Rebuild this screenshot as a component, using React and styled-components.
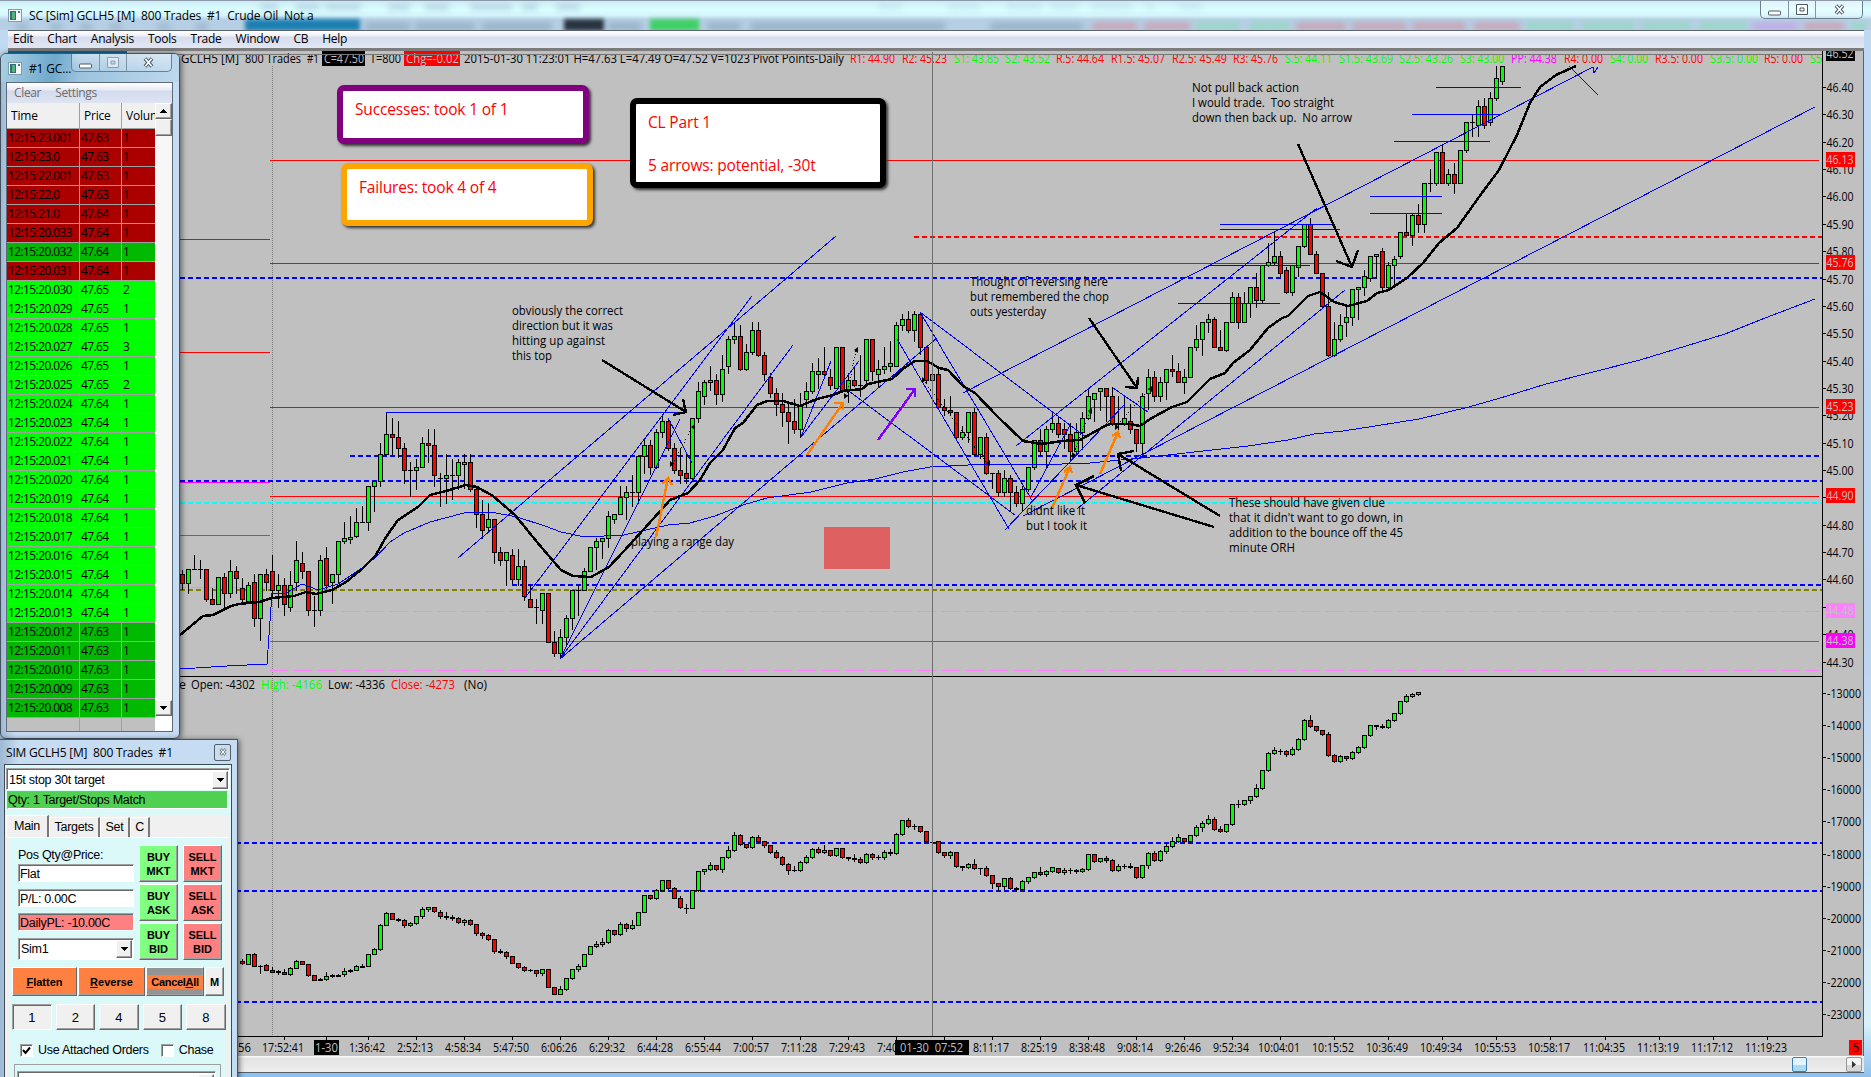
import styled, { createGlobalStyle, css } from "styled-components";

//Data :

const CANDLE_START = 272;
const CANDLE_STEP = 6;

// colour, high, body top, body bottom, low
const priceBars = `
r570,574,583,589 g569,569,583,593 g555,569,569,569 g560,569,569,578 r569,569,599,601
r588,599,604,604 g577,577,604,604 r573,577,593,607 g560,571,593,597 r566,571,578,593
r578,588,599,601 g582,585,601,603 r574,582,618,626 g574,574,618,640 r569,574,582,590
r555,571,590,597 g574,585,590,607 r578,585,604,615 g571,585,607,611 g541,560,582,590
r552,563,571,578 r571,571,610,615 g596,610,610,626 g555,560,610,615 r547,558,585,588
g574,574,582,603 g541,541,574,583 g522,538,541,543 g516,537,539,543 g508,522,536,537
g506,522,522,522 g486,486,522,530 g481,481,486,511 g443,454,481,486 g412,434,454,454
r418,434,437,454 r421,437,448,457 r443,448,470,483 g462,470,470,496 g459,467,470,489
g437,443,467,467 r429,443,445,462 r429,445,475,486 g473,478,478,506 g454,475,478,503
g459,475,475,499 g459,462,475,489 g454,462,464,488 r454,462,489,491 r486,489,514,527
r500,514,530,538 g503,519,527,532 r519,519,552,563 r547,552,560,565 g552,552,560,585
r549,555,579,583 g549,566,579,585 r560,566,596,600 r585,599,607,607 g599,607,607,623
g593,593,610,623 r593,593,642,642 r631,642,653,656 g629,637,653,656 g615,618,637,644
g590,590,618,629 g585,590,590,615 g568,571,590,590 g547,547,571,571 g538,541,547,569
g538,538,541,558 g511,516,538,547 g514,514,519,523 g486,497,514,514 g486,492,497,519
g475,492,492,506 g456,456,492,503 g440,445,456,473 r440,445,467,474 g429,432,467,468
g415,421,432,437 r418,421,448,450 r443,448,470,473 r448,470,475,483 r452,473,478,483
g418,418,478,481 g382,391,418,422 g380,382,396,404 g366,380,382,390 r374,380,394,404
g355,369,394,401 g336,339,366,373 g323,336,339,343 r325,336,369,370 g344,352,369,370
g322,330,352,354 r322,330,355,356 r352,355,374,380 r373,377,393,397 r388,393,404,415
r393,404,412,426 r404,412,421,443 r399,421,429,433 g393,405,429,437 g382,391,399,407
g363,371,391,393 g358,371,374,388 r347,371,374,376 r369,377,385,389 g347,347,388,388
r347,347,390,392 g373,380,390,402 r368,380,385,386 g355,385,385,396 g339,339,380,386
r339,339,371,380 g360,369,374,387 g347,366,369,373 g341,363,366,371 g322,325,366,366
g314,319,325,330 r311,319,330,332 g311,314,330,341 r312,314,347,354 r347,347,380,383
g374,374,380,380 r367,374,407,408 r399,407,410,415 r396,410,412,415 r412,412,437,438
g426,432,437,439 g412,412,432,442 r408,412,454,455 g437,437,454,458 r433,437,473,474
g473,473,473,488 r470,473,492,496 g470,478,492,496 r475,478,492,511 r486,492,503,506
g486,489,503,511 g467,467,489,491 g440,440,467,469 r429,440,451,455 g426,429,451,467
g412,423,429,432 r417,423,434,437 r423,429,434,448 r423,434,451,461 g423,432,451,455
g412,418,432,449 g388,396,418,419 g393,393,399,421 g388,388,391,410 r388,388,396,421
r387,396,423,425 g396,424,424,429 g397,418,423,425 r404,421,429,433 r429,429,443,451
g393,396,443,454 g369,377,393,409 r371,377,396,401 g377,382,396,401 g369,369,382,399
r355,369,371,376 r363,371,382,382 g369,377,382,393 g347,347,377,377 g325,339,347,350
g322,322,339,355 g314,319,322,332 r317,319,347,347 r330,347,350,350 g322,322,350,351
g292,297,322,322 r293,297,322,328 g292,303,322,322 g287,287,303,317 r273,287,300,307
g265,265,300,303 g243,262,265,266 g231,256,262,264 r251,256,273,276 r267,270,292,293
g265,265,292,295 g246,246,267,276 g224,224,246,247 r218,224,254,254 r251,254,273,273
r273,273,306,308 r292,306,355,356 g322,339,355,356 g314,325,339,341 g307,317,322,336
g289,289,317,325 g287,287,289,319 g270,276,287,295 g256,256,278,281 g254,254,256,278
r248,251,287,292 g262,265,287,289 g256,259,265,284 g232,232,256,258 r213,232,235,236
g213,215,235,245 r204,215,224,232 g183,183,224,232 g169,183,183,191 g152,152,183,185
r145,152,183,183 g169,174,183,185 r163,174,183,193 g150,150,183,183 g122,122,150,152
g115,122,122,136 g100,106,125,136 r98,106,125,128 g92,98,122,125 g66,78,98,100
g66,66,81,84`;

const tickBars = `
r959,961,963,964 g954,954,964,964 r953,954,966,966 g965,966,966,973 r964,965,970,970
r967,970,972,972 r970,971,972,974 r969,972,974,974 g967,968,974,975 g960,961,968,968
r961,961,964,964 r964,964,975,976 r975,975,980,980 g978,979,980,980 g972,976,979,980
g974,975,976,977 g974,975,976,976 g968,971,974,976 g969,970,971,972 g965,966,970,970
g964,966,967,967 g954,954,966,966 g948,949,954,954 g924,925,949,950 g912,913,925,925
r913,913,919,919 r918,919,920,921 r919,920,925,927 g922,923,925,926 g916,916,923,924
g907,909,916,918 g907,907,909,911 r907,907,911,912 r910,912,916,918 r912,916,917,919
r915,917,918,920 r917,918,922,923 g919,920,922,925 r919,920,924,925 r924,924,933,935
r932,933,935,938 r934,935,939,940 r939,939,951,953 r949,951,952,953 r951,952,956,958
r956,956,963,963 r963,963,967,968 r966,967,970,971 g969,970,970,971 r970,970,973,976
g969,969,973,975 r969,969,987,987 r987,987,994,994 g986,989,994,994 g978,978,989,990
g969,969,978,979 g964,966,969,971 g954,954,966,966 g946,946,954,954 g941,944,946,947
g938,942,944,946 g929,930,942,943 r930,930,934,935 g922,924,934,935 r923,924,928,931
g920,925,928,929 g912,912,925,925 g895,895,912,912 r895,895,898,899 g889,890,898,899
g880,880,890,890 r880,880,888,889 r887,888,898,898 r896,898,907,908 g904,908,908,913
g890,890,908,908 g871,871,890,891 g869,869,871,874 g862,865,869,870 r865,865,869,870
g857,857,869,872 g846,850,857,858 g832,835,850,851 r834,835,844,845 r844,844,847,848
g836,837,847,848 r835,837,841,842 r841,841,845,847 r845,845,852,853 r850,852,857,858
r856,857,864,865 r863,864,870,874 g866,870,870,871 g861,862,870,871 g855,857,862,863
g848,849,857,858 r847,849,852,853 g845,850,852,853 r850,850,855,856 g848,848,855,856
r848,848,857,858 r857,857,858,860 r854,858,859,861 r857,859,862,863 g853,854,862,863
r853,854,857,859 g855,857,857,859 g850,852,857,859 g849,852,853,855 g833,834,853,854
g820,820,834,835 r818,820,826,827 g824,826,826,829 r826,826,831,832 r831,831,841,842
g841,842,842,844 r841,841,852,853 r852,852,855,857 g851,852,855,858 r852,852,866,867
r866,866,867,870 g863,864,867,868 r859,864,868,869 g868,868,868,874 r866,868,875,876
r875,875,883,888 r883,883,886,890 g878,878,886,889 r877,878,888,889 r887,888,889,891
g880,881,889,890 g877,877,881,883 g872,872,877,878 r867,872,874,875 g870,871,874,876
g867,867,871,872 r868,868,872,873 g868,870,872,874 g868,870,870,873 r869,870,871,873
g868,869,871,872 g854,854,869,870 r854,854,861,862 g858,858,861,862 r856,858,860,862
r859,860,870,871 g864,866,870,871 g864,866,866,868 r863,866,867,868 r867,867,877,878
g865,865,877,878 g852,853,865,868 r851,853,860,861 g850,851,860,861 g843,846,851,853
g837,841,846,847 g834,837,841,842 r838,838,841,842 g835,835,841,842 g825,827,835,836
g821,823,827,831 g815,819,823,824 r817,819,829,830 r826,829,831,832 g824,824,831,832
g804,804,824,825 g800,804,804,807 g800,800,804,805 g796,796,800,803 g784,788,796,797
g770,770,788,789 g752,753,770,771 g747,750,753,754 g749,751,751,754 r750,751,754,756
g747,749,754,755 g738,739,749,750 g719,720,739,740 r715,720,726,727 r726,726,730,731
r730,730,734,735 r732,734,755,756 r754,755,761,762 g755,756,761,762 r756,756,758,760
g751,752,758,759 g746,747,752,753 g735,735,747,748 g725,725,735,736 r725,725,726,729
r724,726,727,728 g719,720,727,728 g713,713,720,721 g701,701,713,714 g694,696,701,702
g693,694,696,697 g692,692,694,695`;

function parseBars(source, firstIndex) {
  return source
    .trim()
    .split(/\s+/)
    .map((item, i) => {
      const [high, top, bottom, low] = item.slice(1).split(",").map(Number);
      return {
        x: CANDLE_START + CANDLE_STEP * (firstIndex + i),
        up: item[0] === "g",
        high,
        top,
        bottom,
        low,
      };
    });
}

const priceCandles = parseBars(priceBars, -15);
const tickCandles = parseBars(tickBars, -5);

const fastAverage =
  "180,635 203,616 213,615 231,606 239,604 259,602 272,598 294,596 306,592 316,594 332,590 346,582 362,569 376,555 386,537 398,520 418,507 430,495 446,491 466,485 477,487 493,496 515,515 537,542 561,570 573,576 591,577 609,567 624,551 653,519 670,500 688,493 700,480 710,463 723,450 735,428 743,423 757,405 767,401 783,401 800,406 817,399 833,395 843,391 862,389 868,384 892,379 903,369 915,361 927,361 939,368 948,370 963,386 975,393 998,417 1023,441 1042,444 1062,441 1080,440 1103,427 1110,424 1130,424 1140,426 1150,419 1172,407 1187,402 1210,379 1225,373 1233,363 1250,350 1268,328 1282,318 1288,316 1308,296 1320,292 1334,302 1348,306 1367,301 1377,293 1389,290 1407,278 1423,263 1439,243 1457,228 1479,197 1499,170 1517,135 1530,103 1540,87 1556,75 1576,66";

const slowAverage =
  "180,669 227,666 267,664 272,593 286,593 302,584 318,590 338,584 362,568 376,557 390,542 404,533 430,522 464,513 491,512 517,517 545,526 561,532 585,537 624,535 668,525 690,523 715,516 743,505 767,498 811,492 847,483 875,479 903,472 930,467 988,464 1034,465 1090,463 1141,458 1248,446 1288,440 1314,434 1343,431 1375,426 1419,419 1469,407 1507,396 1546,384 1640,360 1686,346 1725,334 1765,318 1815,299";

const levels = [
  { x: 270, to: 1819, y: 160, color: "#f00" },
  { x: 270, to: 1819, y: 263, color: "#f00" },
  { x: 270, to: 1819, y: 407, color: "#f00" },
  { x: 270, to: 1819, y: 496, color: "#f00" },
  { x: 180, to: 270, y: 239, color: "#f00" },
  { x: 180, to: 270, y: 352, color: "#f00" },
  { x: 180, to: 270, y: 482, color: "#f0f" },
  { x: 180, to: 270, y: 535, color: "#f0f" },
  { x: 180, to: 270, y: 587, color: "#ff80ff" },
  { x: 270, to: 1819, y: 641, color: "#f0f" },
  { x: 270, to: 1819, y: 611, color: "#ff80ff", dash: "18 6" },
  { x: 270, to: 1819, y: 670, color: "#ff80ff", dash: "18 6" },
  { x: 914, to: 1822, y: 237, color: "#f00", dash: "5 3", width: 2 },
  { x: 180, to: 1822, y: 278, color: "#00f", dash: "5 3", width: 2 },
  { x: 350, to: 1822, y: 456, color: "#00f", dash: "5 3", width: 2 },
  { x: 180, to: 1822, y: 481, color: "#00f", dash: "5 3", width: 2 },
  { x: 180, to: 1822, y: 503, color: "#0ff", dash: "5 3", width: 2 },
  { x: 512, to: 1822, y: 585, color: "#00f", dash: "5 3", width: 2 },
  { x: 180, to: 1822, y: 590, color: "#808000", dash: "5 3", width: 2 },
  { x: 180, to: 1822, y: 843, color: "#00f", dash: "5 3", width: 2 },
  { x: 180, to: 1822, y: 891, color: "#00f", dash: "5 3", width: 2 },
  { x: 180, to: 1822, y: 1002, color: "#00f", dash: "5 3", width: 2 },
];

const swings = [
  [386, 686, 412],
  [1436, 1521, 87],
  [1412, 1502, 114],
  [1394, 1490, 141],
  [1370, 1442, 196],
  [1370, 1442, 213],
  [1220, 1334, 224],
  [1220, 1340, 229],
  [1209, 1310, 265],
  [1178, 1280, 303],
];

const trendLines = [
  "458,558 836,236",
  "525,598 752,296",
  "560,659 680,419",
  "560,659 793,345",
  "560,659 937,338",
  "668,418 692,463",
  "801,437 831,361",
  "801,437 859,361",
  "897,339 1009,529",
  "850,392 1015,515",
  "920,312 1033,502",
  "920,312 1087,438",
  "1005,530 1125,404",
  "1016,446 1317,208",
  "963,393 1593,67 1594,73 1598,67",
  "1569,66 1598,95",
  "1023,516 1815,107",
  "1077,509 1345,290",
  "1113,388 1148,412",
  "1031,497 1070,425",
];

const tradeLines = [
  "673,464 692,427",
  "847,396 856,350",
  "923,380 987,463",
  "1073,455 1090,411",
  "1116,426 1149,389",
];

// shaft start, tip, then both ends of the head
const arrows = [
  { color: "#000", d: "M602,360L686,412M683,399L686,412L673,415" },
  { color: "#000", d: "M1089,318L1137,388M1138,377L1137,388L1125,387" },
  { color: "#000", d: "M1298,144L1352,267M1358,250L1352,267L1336,261" },
  { color: "#000", d: "M1220,516L1118,454M1134,451L1118,454L1121,471" },
  { color: "#000", d: "M1214,527L1076,485M1094,476L1076,485L1085,503" },
  { color: "#ff8000", d: "M656,537L668,478M662,484L668,478L672,485" },
  { color: "#ff8000", d: "M807,455L843,403M834,403L843,403L843,410" },
  { color: "#ff8000", d: "M1052,508L1070,467M1064,472L1070,467L1072,473" },
  { color: "#ff8000", d: "M1100,474L1118,432M1112,436L1118,432L1120,438" },
  { color: "#8000ff", d: "M878,440L915,389M906,389L915,389L915,397" },
];

const notes = [
  [1192, 92, 107, "Not pull back action"],
  [1192, 107, 142, "I would trade.  Too straight"],
  [1192, 122, 160, "down then back up.  No arrow"],
  [970, 286, 138, "Thought of reversing here"],
  [970, 301, 139, "but remembered the chop"],
  [970, 316, 76, "outs yesterday"],
  [512, 315, 111, "obviously the correct"],
  [512, 330, 101, "direction but it was"],
  [512, 345, 93, "hitting up against"],
  [512, 360, 40, "this top"],
  [631, 546, 103, "playing a range day"],
  [1026, 515, 59, "didnt like it"],
  [1026, 530, 61, "but I took it"],
  [1229, 507, 156, "These should have given clue"],
  [1229, 522, 174, "that it didn't want to go down, in"],
  [1229, 537, 174, "addition to the bounce off the 45"],
  [1229, 552, 66, "minute ORH"],
];

const headerItems = [
  [181, 58, "GCLH5 [M]", "#000"],
  [245, 56, "800 Trades", "#000"],
  [307, 12, "#1", "#000"],
  [324, 40, "C=47.50", "#c0c0c0"],
  [370, 31, "T=800", "#000"],
  [406, 53, "Chg=-0.02", "#c0c0c0"],
  [464, 380, "2015-01-30 11:23:01 H=47.63 L=47.49 O=47.52 V=1023 Pivot Points-Daily", "#000"],
  [850, 45, "R1: 44.90", "#f00"],
  [902, 45, "R2: 45.23", "#f00"],
  [954, 45, "S1: 43.85", "#0f0"],
  [1005, 45, "S2: 43.52", "#0f0"],
  [1056, 48, "R.5: 44.64", "#f00"],
  [1111, 54, "R1.5: 45.07", "#f00"],
  [1172, 55, "R2.5: 45.49", "#f00"],
  [1233, 45, "R3: 45.76", "#f00"],
  [1285, 47, "S.5: 44.11", "#0f0"],
  [1339, 54, "S1.5: 43.69", "#0f0"],
  [1399, 54, "S2.5: 43.26", "#0f0"],
  [1460, 44, "S3: 43.00", "#0f0"],
  [1511, 46, "PP: 44.38", "#f0f"],
  [1564, 39, "R4: 0.00", "#f00"],
  [1610, 38, "S4: 0.00", "#0f0"],
  [1655, 48, "R3.5: 0.00", "#f00"],
  [1710, 48, "S3.5: 0.00", "#0f0"],
  [1764, 39, "R5: 0.00", "#f00"],
  [1810, 12, "S5", "#0f0"],
];

const studyItems = [
  [179, 7, "e", "#000"],
  [191, 64, "Open: -4302", "#000"],
  [261, 61, "High: -4166", "#0f0"],
  [328, 57, "Low: -4336", "#000"],
  [391, 64, "Close: -4273", "#f00"],
  [464, 23, "(No)", "#000"],
];

const priceTicks = [
  "46.40", "46.30", "46.20", "46.10", "46.00", "45.90", "45.80", "45.70",
  "45.60", "45.50", "45.40", "45.30", "45.20", "45.10", "45.00", "44.90",
  "44.80", "44.70", "44.60", "44.50", "44.40", "44.30",
];

const priceFlags = [
  { y: 54, label: "46.52", color: "#000" },
  { y: 160, label: "46.13", color: "#f00" },
  { y: 263, label: "45.76", color: "#f00" },
  { y: 407, label: "45.23", color: "#f00" },
  { y: 496, label: "44.90", color: "#f00" },
  { y: 611, label: "44.48", color: "#ff80ff" },
  { y: 641, label: "44.38", color: "#f0f" },
];

const times = [
  [284, "17:52:41"], [326, ""], [368, "1:36:42"], [416, "2:52:13"],
  [464, "4:58:34"], [512, "5:47:50"], [560, "6:06:26"], [608, "6:29:32"],
  [656, "6:44:28"], [704, "6:55:44"], [752, "7:00:57"], [800, "7:11:28"],
  [848, "7:29:43"], [896, "7:40:16"], [944, ""], [992, "8:11:17"],
  [1040, "8:25:19"], [1088, "8:38:48"], [1136, "9:08:14"], [1184, "9:26:46"],
  [1232, "9:52:34"], [1280, "10:04:01"], [1334, "10:15:52"],
  [1388, "10:36:49"], [1442, "10:49:34"], [1496, "10:55:53"],
  [1550, "10:58:17"], [1605, "11:04:35"], [1659, "11:13:19"],
  [1713, "11:17:12"], [1767, "11:19:23"],
];

const sales = [
  ["12:15:23.001", "47.63", 1, "down"],
  ["12:15:23.0", "47.63", 1, "down"],
  ["12:15:22.001", "47.63", 1, "down"],
  ["12:15:22.0", "47.63", 1, "down"],
  ["12:15:21.0", "47.64", 1, "down"],
  ["12:15:20.033", "47.64", 1, "down"],
  ["12:15:20.032", "47.64", 1, "up"],
  ["12:15:20.031", "47.64", 1, "down"],
  ["12:15:20.030", "47.65", 2, "ask"],
  ["12:15:20.029", "47.65", 1, "ask"],
  ["12:15:20.028", "47.65", 1, "ask"],
  ["12:15:20.027", "47.65", 3, "ask"],
  ["12:15:20.026", "47.65", 1, "ask"],
  ["12:15:20.025", "47.65", 2, "ask"],
  ["12:15:20.024", "47.64", 1, "ask"],
  ["12:15:20.023", "47.64", 1, "ask"],
  ["12:15:20.022", "47.64", 1, "ask"],
  ["12:15:20.021", "47.64", 1, "ask"],
  ["12:15:20.020", "47.64", 1, "ask"],
  ["12:15:20.019", "47.64", 1, "ask"],
  ["12:15:20.018", "47.64", 1, "ask"],
  ["12:15:20.017", "47.64", 1, "ask"],
  ["12:15:20.016", "47.64", 1, "ask"],
  ["12:15:20.015", "47.64", 1, "ask"],
  ["12:15:20.014", "47.64", 1, "ask"],
  ["12:15:20.013", "47.64", 1, "ask"],
  ["12:15:20.012", "47.63", 1, "up"],
  ["12:15:20.011", "47.63", 1, "up"],
  ["12:15:20.010", "47.63", 1, "up"],
  ["12:15:20.009", "47.63", 1, "up"],
  ["12:15:20.008", "47.63", 1, "up"],
];

const rowColors = { down: "#aa0000", up: "#00b900", ask: "#00ff00" };

//Style Components :

const GlobalStyle = createGlobalStyle`
  * {
    box-sizing: border-box;
  }

  body {
    margin: 0;
    overflow: hidden;
    font-family: "Open Sans", "Noto Sans", sans-serif;
    font-size: 12px;
    color: #000;
  }
`;

const raised = css`
  border: 1px solid;
  border-color: #fff #696969 #696969 #fff;
  box-shadow: inset -1px -1px 0 #a0a0a0;
`;

const sunken = css`
  border: 1px solid;
  border-color: #a0a0a0 #fff #fff #a0a0a0;
  box-shadow: inset 1px 1px 0 #696969;
`;

const Desktop = styled.div`
  position: relative;
  width: 1871px;
  height: 1077px;
  overflow: hidden;
  display: flex;
  flex-direction: column;
  background: linear-gradient(#bfdaf2, #bcd4ef 60%, #d8f2fb 95%, #8ec0ec);
`;

const TitleBar = styled.header`
  position: relative;
  height: 30px;
  flex: none;
  display: flex;
  align-items: center;
  justify-content: space-between;
  padding: 0 8px 0 8px;
  overflow: hidden;
  border-top: 1px solid #8b9aa8;
  background: linear-gradient(
    #cdeaf6,
    #daffff 30%,
    #d4f4fb 50%,
    #b5cfe4 65%,
    #b9cfe6
  );
`;

const Ghost = styled.span`
  position: absolute;
  top: ${(props) => props.$top ?? 18}px;
  left: ${(props) => props.$left}px;
  width: ${(props) => props.$width}px;
  height: ${(props) => props.$height ?? 10}px;
  background: ${(props) => props.$color};
  opacity: ${(props) => props.$opacity ?? 1};
  filter: blur(${(props) => (props.$opacity ? 3 : 2)}px);
`;

const Title = styled.div`
  position: relative;
  display: flex;
  align-items: center;
  gap: 7px;
  letter-spacing: -0.16px;
  white-space: pre;
`;

const Caption = styled.div`
  position: relative;
  align-self: flex-start;
  display: flex;
  height: 18px;
  border: 1px solid #6d7f90;
  border-top: 0;
  border-radius: 0 0 5px 5px;
  overflow: hidden;
`;

const CaptionButton = styled.button`
  display: grid;
  place-items: center;
  width: ${(props) => props.$width}px;
  padding: 0;
  border: 0;
  border-right: 1px solid #8194a6;
  background: linear-gradient(#ffffff70, #ffffff20);

  &:last-child {
    border-right: 0;
  }
`;

const MenuBar = styled.nav`
  flex: none;
  display: flex;
  align-items: center;
  gap: 14px;
  height: 21px;
  margin: 0 7px 0 8px;
  padding: 0 0 3px 5px;
  border-top: 1px solid #59636f;
  border-bottom: 3px solid #7c7c7c;
  background: linear-gradient(#fff, #eef0f8 30%, #d6dcee 35%, #e2e7f4);
  letter-spacing: -0.25px;
`;

const ChartPane = styled.main`
  position: relative;
  flex: none;
  height: 1005px;
  margin: 0 7px 0 8px;
  border-right: 1px solid #59636f;
  background: #c0c0c0;
`;

const Drawing = styled.svg`
  display: block;
  font: 12px "Open Sans", "Noto Sans", sans-serif;
`;

const Callout = styled.section`
  position: absolute;
  left: ${(props) => props.$left}px;
  top: ${(props) => props.$top}px;
  width: ${(props) => props.$width}px;
  height: ${(props) => props.$height}px;
  padding: 8px 12px;
  border: 6px solid ${(props) => props.$color};
  border-radius: 7px;
  background: #fff;
  box-shadow: 2px 2px 3px #333;
  color: #f00;
  font-size: 15.5px;
  line-height: 21.5px;
  letter-spacing: -0.17px;
  white-space: pre;
`;

const ScrollBar = styled.footer`
  flex: none;
  display: flex;
  align-items: center;
  justify-content: flex-end;
  gap: 39px;
  height: 17px;
  margin: 0 7px 0 8px;
  padding-right: 2px;
  border-bottom: 1px solid #55606c;
  background: linear-gradient(#fff, #e3e3e3 15%, #eee);
`;

const Thumb = styled.div`
  width: 15px;
  height: 15px;
  border: 1px solid #3c7fb1;
  border-radius: 2px;
  background: linear-gradient(#e3f4fc 50%, #a9dbf5 50%);
`;

const ScrollArrow = styled.button`
  display: grid;
  place-items: center;
  width: 16px;
  height: 15px;
  padding: 0;
  border: 1px solid #979797;
  border-radius: 2px;
  background: linear-gradient(#f5f5f5 50%, #d8d8d8 50%);
`;

const FloatingWindow = styled.section`
  position: absolute;
  display: flex;
  flex-direction: column;
  border: 1px solid #46525e;
  background: linear-gradient(90deg, #9db9d4, #c6dcf2 8%, #c6dcf2);
  box-shadow: 1px 1px 6px #0009;
`;

const SalesWindow = styled(FloatingWindow)`
  left: 0;
  top: 53px;
  width: 180px;
  height: 686px;
  padding: 0 6px 6px 5px;
  border-radius: 6px;
`;

const SalesTitle = styled.div`
  display: flex;
  justify-content: space-between;
  align-items: center;
  height: 28px;
  margin: 0 -6px 0 -5px;
  padding: 0 7px 0 7px;
  border-radius: 5px 5px 0 0;
  background: linear-gradient(100deg, #a8d0e4, #6fa9cc 30%, #9cc3de 45%, #bdd8ee);
`;

const SalesClient = styled.div`
  flex: 1;
  min-height: 0;
  display: flex;
  flex-direction: column;
  border: 1px solid #5d6a78;
  background: #c0c0c0;
`;

const SalesMenu = styled.div`
  display: flex;
  align-items: center;
  gap: 14px;
  height: 20px;
  padding: 0 0 2px 7px;
  background: linear-gradient(#fff, #e8ebf5 35%, #d3daed 40%, #dfe4f2);
  color: #6d6d6d;
  letter-spacing: -0.35px;
`;

const SalesBody = styled.div`
  flex: 1;
  min-height: 0;
  display: flex;
`;

const Grid = styled.div`
  width: 148px;
  display: flex;
  flex-direction: column;
`;

const GridHead = styled.div`
  flex: none;
  display: grid;
  grid-template-columns: 73px 42px 33px;
  height: 26px;
  border-bottom: 1px solid #a0a0a0;
  background: #f0f0f0;
`;

const HeadCell = styled.div`
  overflow: hidden;
  padding-left: 4px;
  border-right: 1px solid #a0a0a0;
  line-height: 26px;
  letter-spacing: -0.2px;

  &:last-child {
    border-right: 0;
  }
`;

const SaleRow = styled.div`
  flex: none;
  display: grid;
  grid-template-columns: 73px 42px 33px;
  height: 19px;
  border-bottom: 1px solid #a0a0a0;
  background: ${(props) => props.$color};
`;

const Cell = styled.div`
  padding-left: 1px;
  border-right: 1px solid #a0a0a0;
  line-height: 17px;
  letter-spacing: -0.6px;

  &:last-child {
    border-right: 0;
  }
`;

const BlankRow = styled(SaleRow)`
  flex: 1;
  height: auto;
  border-bottom: 0;
`;

const SideScroll = styled.div`
  flex: 1;
  display: flex;
  flex-direction: column;
  background: #f7f7f7;
`;

const SideButton = styled.div`
  ${raised}
  flex: none;
  display: grid;
  place-items: center;
  height: 16px;
  background: #f0f0f0;
`;

const SideThumb = styled(SideButton)`
  height: 17px;
`;

const SideGap = styled.div`
  flex: 1;
`;

const SideTail = styled.div`
  height: 15px;
  background: #fff;
`;

const OrderWindow = styled(FloatingWindow)`
  left: -1px;
  top: 739px;
  width: 239px;
  height: 345px;
  padding: 0 6px 0 5px;
`;

const OrderTitle = styled.div`
  flex: none;
  display: flex;
  align-items: center;
  justify-content: space-between;
  height: 24px;
  padding-left: 1px;
  letter-spacing: -0.2px;
  white-space: pre;
`;

const SmallClose = styled.button`
  display: grid;
  place-items: center;
  width: 17px;
  height: 17px;
  padding: 0;
  border: 1px solid #51606f;
  border-radius: 2px;
  background: #cbdcec;
`;

const OrderClient = styled.div`
  flex: 1;
  display: flex;
  flex-direction: column;
  margin: 0 -1px;
  padding: 3px 1px 0;
  border: 1px solid #3f4a55;
  background: #dcf9fa;
  font-family: "Liberation Sans", Arial, sans-serif;
  font-size: 12.5px;
  letter-spacing: -0.28px;
`;

const Combo = styled.div`
  ${sunken}
  display: flex;
  align-items: center;
  justify-content: space-between;
  height: 22px;
  padding: 2px 1px 1px 2px;
  background: #fff;
`;

const ComboButton = styled.div`
  ${raised}
  display: grid;
  place-items: center;
  width: 16px;
  height: 18px;
  background: #f0f0f0;
`;

const MatchBar = styled.div`
  height: 18px;
  margin: 1px 2px 0 1px;
  border: 1px solid #a0a0a0;
  border-right-color: #fff;
  border-bottom-color: #fff;
  background: #50d050;
  line-height: 17px;
`;

const Tabs = styled.div`
  display: flex;
  align-items: flex-end;
  height: 28px;
  padding-top: 6px;
  background: linear-gradient(#dcf9fa 6px, #f0f0f0 6px);
`;

const Tab = styled.div`
  flex: none;
  width: ${(props) => props.$width}px;
  height: ${(props) => (props.$active ? 22 : 20)}px;
  padding-top: ${(props) => (props.$active ? 3 : 2)}px;
  border-left: 1px solid #fff;
  border-top: 1px solid #fff;
  border-right: 2px solid #787878;
  text-align: center;
`;

const TabPage = styled.div`
  flex: 1;
  display: flex;
  flex-direction: column;
  border-top: 1px solid #fff;
  border-left: 4px solid #f0f0f0;
  border-right: 4px solid #f0f0f0;
  padding: 7px 0 0 2px;
`;

const TradePanel = styled.div`
  display: grid;
  grid-template-columns: 116px 39px 39px;
  column-gap: 5px;
  padding-left: 6px;
  height: 119px;
`;

const Fields = styled.div`
  display: flex;
  flex-direction: column;
  padding-top: 2px;
`;

const FieldLabel = styled.label`
  line-height: 17px;
  height: 17px;
`;

const Field = styled.div`
  ${sunken}
  height: 18px;
  margin-bottom: 6.5px;
  padding-left: 1px;
  background: ${(props) => props.$color ?? "#fff"};
  line-height: 18px;
`;

const ButtonColumn = styled.div`
  display: flex;
  flex-direction: column;
  gap: 2px;
`;

const TradeButton = styled.button`
  ${raised}
  height: 37px;
  padding: 0;
  background: ${(props) => (props.$buy ? "#80ff80" : "#ff8080")};
  font: bold 11px/14px "Liberation Sans", Arial, sans-serif;
  white-space: pre;
`;

const ActionRow = styled.div`
  display: grid;
  grid-template-columns: 65px 67px 58px 19px;
  column-gap: 1px;
  height: 29px;
  margin-top: 3px;
`;

const ActionButton = styled.button`
  ${raised}
  padding: 0;
  overflow: hidden;
  background: ${(props) => props.$color};
  font: bold 11px "Liberation Sans", Arial, sans-serif;
`;

const Highlight = styled.span`
  display: block;
  background: #ff8040;
  letter-spacing: -0.3px;
  line-height: 14px;
`;

const SizeRow = styled.div`
  display: flex;
  gap: 4px;
  margin-top: 8px;
`;

const SizeButton = styled.button`
  ${(props) => (props.$pressed ? sunken : raised)}
  width: 39.5px;
  height: 26px;
  padding: 0;
  background: #f0f0f0;
  font: 13px "Liberation Sans", Arial, sans-serif;
`;

const OptionRow = styled.div`
  display: flex;
  align-items: center;
  margin-top: 13px;
  padding-left: 8px;
  white-space: nowrap;
`;

const CheckBox = styled.span`
  ${sunken}
  flex: none;
  display: grid;
  place-items: center;
  width: 13px;
  height: 13px;
  margin-right: 5px;
  background: #fff;
`;

const OptionLabel = styled.span`
  margin-right: 12px;
`;

const GroupBox = styled.div`
  flex: 1;
  margin: 7px 5px 0 2px;
  padding: 6px 4px 0 2px;
  border: 1px solid #a0a0a0;
`;

//Component :

function AppIcon() {
  return (
    <svg width="14" height="13" viewBox="0 0 14 13">
      <rect x=".5" y=".5" width="13" height="12" fill="#f5f7f8" stroke="#8799a6" />
      <rect x="2" y="2" width="6" height="9" fill="#2c6f77" />
      <rect x="4" y="3" width="3" height="7" fill="#58b07e" />
      <rect x="10" y="2" width="2" height="2" fill="#52778f" />
    </svg>
  );
}

function CloseGlyph({ size = 11 }) {
  return (
    <svg width={size} height={size} viewBox="0 0 11 11">
      <path d="M2 1.5L9 9.5M9 1.5L2 9.5" stroke="#4e5966" strokeWidth="3.6" />
      <path d="M2.3 1.8L8.7 9.2M8.7 1.8L2.3 9.2" stroke="#fff" strokeWidth="1.7" />
    </svg>
  );
}

function MinGlyph() {
  return (
    <svg width="13" height="12" viewBox="0 0 13 12">
      <rect x=".5" y="7" width="12" height="4" rx="1" fill="#fff" stroke="#4e5966" />
    </svg>
  );
}

function MaxGlyph({ faded }) {
  return (
    <svg width="12" height="11" viewBox="0 0 12 11" opacity={faded ? 0.45 : 1}>
      <path
        d="M.5.5h11v10h-11zM4 4v3h4V4z"
        fill="#fff"
        fillRule="evenodd"
        stroke="#4e5966"
      />
    </svg>
  );
}

function Triangle({ up }) {
  return (
    <svg width="7" height="4" viewBox="0 0 7 4" shapeRendering="crispEdges">
      <path d={up ? "M0 4H7L3.5 0Z" : "M0 0H7L3.5 4Z"} />
    </svg>
  );
}

function Label({ x, y, width, color = "#000", children }) {
  return (
    <text
      x={x}
      y={y}
      fill={color}
      textLength={width}
      lengthAdjust="spacingAndGlyphs"
      xmlSpace="preserve"
    >
      {children}
    </text>
  );
}

function Candles({ bars }) {
  return (
    <g shapeRendering="crispEdges">
      {bars.map(({ x, up, high, top, bottom, low }) => (
        <g key={x}>
          <rect x={x} y={high} width="1" height={low - high + 1} />
          <rect x={x - 2} y={top} width="5" height={bottom - top + 1} />
          {bottom - top > 1 && (
            <rect
              x={x - 1}
              y={top + 1}
              width="3"
              height={bottom - top - 1}
              fill={up ? "#0f0" : "#f00"}
            />
          )}
        </g>
      ))}
    </g>
  );
}

function Level({ x, to, y, color, dash, width = 1 }) {
  const middle = width === 1 ? y + 0.5 : y;
  return (
    <line
      x1={x}
      x2={to}
      y1={middle}
      y2={middle}
      stroke={color}
      strokeWidth={width}
      strokeDasharray={dash}
    />
  );
}

function PriceAxis() {
  return (
    <g>
      <path d="M1822.5 51V1037" stroke="#000" />
      {priceTicks.map((label, i) => {
        const y = Math.floor(87.5 + i * 27.36);
        return (
          <g key={label}>
            <path d={`M1823 ${y + 0.5}h3`} stroke="#000" />
            {label !== "44.50" && label !== "44.90" && (
              <Label x={1826.5} y={y + 5} width={27}>
                {label}
              </Label>
            )}
          </g>
        );
      })}
      {priceFlags.map(({ y, label, color }) => (
        <g key={label}>
          <rect x="1826" y={y - 8} width="29" height="15" fill={color} />
          <Label x={1826.5} y={y + 4} width={27} color="#c0c0c0">
            {label}
          </Label>
        </g>
      ))}
      {Array.from({ length: 11 }, (_, i) => {
        const y = Math.floor(693.5 + i * 32.1);
        return (
          <g key={i}>
            <path d={`M1823 ${y + 0.5}h3`} stroke="#000" />
            <Label x={1827} y={y + 5} width={34}>
              {-(13 + i) * 1000}
            </Label>
          </g>
        );
      })}
    </g>
  );
}

function TimeAxis() {
  return (
    <g>
      <path d="M180 1036.5H1823" stroke="#000" />
      <Label x={238} y={1052} width={13}>
        56
      </Label>
      {times.map(([x, label]) => (
        <g key={x}>
          <path d={`M${x + 0.5} 1037v3`} stroke="#000" />
          {label && (
            <Label
              x={x - (label.length === 8 ? 22 : 19)}
              y={1052}
              width={label.length === 8 ? 42 : 36}
            >
              {label}
            </Label>
          )}
        </g>
      ))}
      <rect x="314" y="1040" width="25" height="15" />
      <Label x={315} y={1052} width={23} color="#c0c0c0">
        1-30
      </Label>
      <rect x="895" y="1040" width="74" height="15" />
      <Label x={900} y={1052} width={63} color="#c0c0c0">
        {"01-30  07:52"}
      </Label>
      <rect x="1849" y="1040" width="13" height="15" fill="#f00" />
      <Label x={1853} y={1052} width={6}>
        5
      </Label>
    </g>
  );
}

function Chart() {
  return (
    <Drawing width="1855" height="1005" viewBox="8 51 1855 1005">
      <g shapeRendering="crispEdges">
        <path
          d="M272.5 66V1036"
          stroke="#808080"
          strokeDasharray="1 1"
          fill="none"
        />
        {levels.map((level) => (
          <Level key={`${level.y}-${level.x}`} {...level} />
        ))}
        <rect x="824" y="527" width="66" height="42" fill="#df6060" />
      </g>

      <Candles bars={priceCandles} />
      <Candles bars={tickCandles} />

      <g shapeRendering="crispEdges" fill="none" stroke="#00f">
        {swings.map(([x, to, y]) => (
          <path key={`${x}-${y}`} d={`M${x} ${y + 0.5}H${to}`} />
        ))}
        {trendLines.map((points) => (
          <polyline key={points} points={points} />
        ))}
        <polyline points={slowAverage} />
      </g>
      <g shapeRendering="crispEdges" fill="none" stroke="#000">
        <polyline points={fastAverage} strokeWidth="2.5" />
        {tradeLines.map((points) => (
          <polyline key={points} points={points} strokeDasharray="1 2" />
        ))}
        {arrows.map(({ color, d }) => (
          <path key={d} d={d} stroke={color} strokeWidth="2.4" />
        ))}
      </g>
      <path d="M670 461v6l4-3zM844 393v6l4-3zM922 377v6l4-3zM1072 452v6l4-3zM1115 424v6l4-3z" />
      <path d="M695 424v6l-4-3zM858 347v6l-4-3zM990 460v6l-4-3zM1092 408v6l-4-3zM1152 386v6l-4-3z" />

      {notes.map(([x, y, width, text]) => (
        <Label key={text} x={x} y={y} width={width}>
          {text}
        </Label>
      ))}
      <path d="M180 676.5H1823" stroke="#000" />
      {studyItems.map(([x, width, text, color]) => (
        <Label key={text} x={x} y={689} width={width} color={color}>
          {text}
        </Label>
      ))}

      <PriceAxis />
      <TimeAxis />

      <rect x="322" y="51" width="43" height="15" />
      <rect x="404" y="51" width="56" height="15" fill="#f00" />
      {headerItems.map(([x, width, text, color]) => (
        <Label key={text} x={x} y={63} width={width} color={color}>
          {text}
        </Label>
      ))}
      <path d="M932.5 52V1036" stroke="#6e6e6e" shapeRendering="crispEdges" />
      <path d="M8 54.5H1822" stroke="#757575" />
      <rect x="8" y="51" width="119" height="3" fill="#0b6b9c" />
    </Drawing>
  );
}

function TitleGlass() {
  return (
    <>
      <Ghost $left={245} $width={115} $color="#1c7fb0" $height={12} />
      <Ghost $left={564} $width={40} $color="#283440" $height={12} />
      <Ghost $left={650} $width={49} $color="#3fd065" $height={12} />
      {[16, 50, 80, 110, 158, 196].map((left) => (
        <Ghost key={left} $left={left} $width={12} $top={23} $height={6} $color="#7b98ae" $opacity={0.5} />
      ))}
      {[[365, 45], [415, 60], [482, 70], [608, 34], [707, 34], [750, 195], [990, 93]].map(
        ([left, width]) => (
          <Ghost key={left} $left={left} $width={width} $top={22} $height={7} $color="#7f99b0" $opacity={0.6} />
        )
      )}
      {[[1092, 45], [1144, 46], [1296, 50], [1352, 54], [1412, 54], [1474, 46], [1804, 40]].map(
        ([left, width]) => (
          <Ghost key={left} $left={left} $width={width} $top={22} $height={7} $color="#d77f8d" $opacity={0.6} />
        )
      )}
      {[[1196, 44], [1250, 40], [1526, 48], [1582, 52], [1642, 48], [1700, 46], [1852, 14]].map(
        ([left, width]) => (
          <Ghost key={left} $left={left} $width={width} $top={22} $height={7} $color="#86dcb3" $opacity={0.7} />
        )
      )}
      <Ghost $left={1752} $width={46} $top={22} $height={7} $color="#c78ae6" $opacity={0.6} />
      {[
        [260, 18], [296, 24], [325, 36], [388, 22], [425, 24], [470, 42],
        [522, 16], [556, 24], [880, 24], [950, 32], [1008, 36], [1052, 28],
        [1094, 40], [1148, 8], [1180, 24],
      ].map(([left, width]) => (
        <Ghost key={left} $left={left - (left > 600 ? 2 : 0)} $width={width} $top={3} $height={6} $color="#8ea9c6" $opacity={left > 600 ? 0.2 : 0.45} />
      ))}
    </>
  );
}

function TimeAndSales() {
  return (
    <SalesWindow>
      <SalesTitle>
        <Title>
          <AppIcon />
          #1 GC...
        </Title>
        <Caption>
          <CaptionButton $width={28}>
            <MinGlyph />
          </CaptionButton>
          <CaptionButton $width={27}>
            <MaxGlyph faded />
          </CaptionButton>
          <CaptionButton $width={45}>
            <CloseGlyph />
          </CaptionButton>
        </Caption>
      </SalesTitle>
      <SalesClient>
        <SalesMenu>
          <span>Clear</span>
          <span>Settings</span>
        </SalesMenu>
        <SalesBody>
          <Grid>
            <GridHead>
              <HeadCell>Time</HeadCell>
              <HeadCell>Price</HeadCell>
              <HeadCell>Volume</HeadCell>
            </GridHead>
            {sales.map(([time, price, volume, side]) => (
              <SaleRow key={time} $color={rowColors[side]}>
                <Cell>{time}</Cell>
                <Cell>{price}</Cell>
                <Cell>{volume}</Cell>
              </SaleRow>
            ))}
            <BlankRow>
              <Cell />
              <Cell />
              <Cell />
            </BlankRow>
          </Grid>
          <SideScroll>
            <SideButton>
              <Triangle up />
            </SideButton>
            <SideThumb />
            <SideGap />
            <SideButton>
              <Triangle />
            </SideButton>
            <SideTail />
          </SideScroll>
        </SalesBody>
      </SalesClient>
    </SalesWindow>
  );
}

function OrderEntry() {
  return (
    <OrderWindow>
      <OrderTitle>
        {"SIM GCLH5 [M]  800 Trades  #1"}
        <SmallClose>
          <CloseGlyph size={8} />
        </SmallClose>
      </OrderTitle>
      <OrderClient>
        <Combo>
          15t stop 30t target
          <ComboButton>
            <Triangle />
          </ComboButton>
        </Combo>
        <MatchBar>Qty: 1 Target/Stops Match</MatchBar>
        <Tabs>
          <Tab $width={43} $active>
            Main
          </Tab>
          <Tab $width={51}>Targets</Tab>
          <Tab $width={30}>Set</Tab>
          <Tab $width={20}>C</Tab>
        </Tabs>
        <TabPage>
          <TradePanel>
            <Fields>
              <FieldLabel>Pos Qty@Price:</FieldLabel>
              <Field>Flat</Field>
              <Field>P/L: 0.00C</Field>
              <Field $color="#ff8080">DailyPL: -10.00C</Field>
              <Combo>
                Sim1
                <ComboButton>
                  <Triangle />
                </ComboButton>
              </Combo>
            </Fields>
            <ButtonColumn>
              <TradeButton $buy>{"BUY\nMKT"}</TradeButton>
              <TradeButton $buy>{"BUY\nASK"}</TradeButton>
              <TradeButton $buy>{"BUY\nBID"}</TradeButton>
            </ButtonColumn>
            <ButtonColumn>
              <TradeButton>{"SELL\nMKT"}</TradeButton>
              <TradeButton>{"SELL\nASK"}</TradeButton>
              <TradeButton>{"SELL\nBID"}</TradeButton>
            </ButtonColumn>
          </TradePanel>
          <ActionRow>
            <ActionButton $color="#ff8040">
              <u>F</u>latten
            </ActionButton>
            <ActionButton $color="#ff8040">
              <u>R</u>everse
            </ActionButton>
            <ActionButton $color="#949494">
              <Highlight>
                Cancel<u>A</u>ll
              </Highlight>
            </ActionButton>
            <ActionButton $color="#f0f0f0">M</ActionButton>
          </ActionRow>
          <SizeRow>
            {[1, 2, 4, 5, 8].map((size) => (
              <SizeButton key={size} $pressed={size === 1}>
                {size}
              </SizeButton>
            ))}
          </SizeRow>
          <OptionRow>
            <CheckBox>
              <svg width="9" height="9" viewBox="0 0 9 9">
                <path d="M1 4l2.5 3L8 1.5" fill="none" stroke="#000" strokeWidth="2" />
              </svg>
            </CheckBox>
            <OptionLabel>Use Attached Orders</OptionLabel>
            <CheckBox />
            <OptionLabel>Chase</OptionLabel>
          </OptionRow>
          <GroupBox>
            <Combo>
              <span />
              <ComboButton />
            </Combo>
          </GroupBox>
        </TabPage>
      </OrderClient>
    </OrderWindow>
  );
}

function App() {
  return (
    <Desktop>
      <GlobalStyle />
      <TitleBar>
        <TitleGlass />
        <Title>
          <AppIcon />
          {"SC [Sim] GCLH5 [M]  800 Trades  #1  Crude Oil  Not a"}
        </Title>
        <Caption>
          <CaptionButton $width={28}>
            <MinGlyph />
          </CaptionButton>
          <CaptionButton $width={27}>
            <MaxGlyph />
          </CaptionButton>
          <CaptionButton $width={46}>
            <CloseGlyph />
          </CaptionButton>
        </Caption>
      </TitleBar>
      <MenuBar>
        {["Edit", "Chart", "Analysis", "Tools", "Trade", "Window", "CB", "Help"].map(
          (item) => (
            <span key={item}>{item}</span>
          )
        )}
      </MenuBar>
      <ChartPane>
        <Chart />
        <Callout $left={329} $top={34} $width={252} $height={59} $color="#800080">
          Successes: took 1 of 1
        </Callout>
        <Callout $left={333} $top={112} $width={252} $height={63} $color="#ffa500">
          Failures: took 4 of 4
        </Callout>
        <Callout $left={622} $top={47} $width={256} $height={90} $color="#000">
          {"CL Part 1\n\n5 arrows: potential, -30t"}
        </Callout>
      </ChartPane>
      <ScrollBar>
        <Thumb />
        <ScrollArrow>
          <svg width="4" height="7" viewBox="0 0 4 7">
            <path d="M0 0V7L4 3.5Z" fill="#333" />
          </svg>
        </ScrollArrow>
      </ScrollBar>
      <TimeAndSales />
      <OrderEntry />
    </Desktop>
  );
}

export default App;
